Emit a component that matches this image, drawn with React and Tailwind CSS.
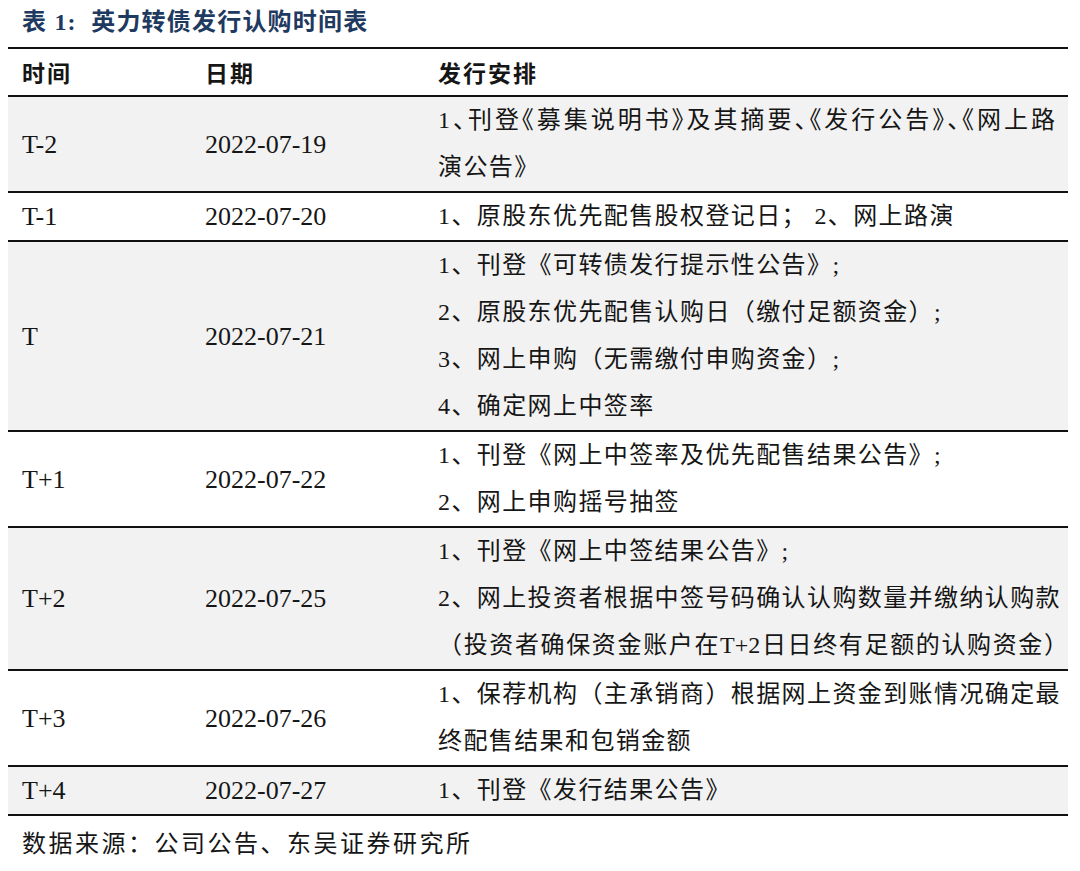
import React from "react";

const rows = [
  {
    t: "T-2",
    date: "2022-07-19",
    h: "min-h-[94px]",
    lines: [
      { text: "1、刊登《募集说明书》及其摘要、《发行公告》、《网上路", full: true, tight: true },
      { text: "演公告》" },
    ],
  },
  { t: "T-1", date: "2022-07-20", h: "min-h-[48px]", lines: [{ text: "1、原股东优先配售股权登记日； 2、网上路演" }] },
  {
    t: "T",
    date: "2022-07-21",
    h: "min-h-[188px]",
    lines: [
      { text: "1、刊登《可转债发行提示性公告》;" },
      { text: "2、原股东优先配售认购日（缴付足额资金）;" },
      { text: "3、网上申购（无需缴付申购资金）;" },
      { text: "4、确定网上中签率" },
    ],
  },
  {
    t: "T+1",
    date: "2022-07-22",
    h: "min-h-[94px]",
    lines: [{ text: "1、刊登《网上中签率及优先配售结果公告》;" }, { text: "2、网上申购摇号抽签" }],
  },
  {
    t: "T+2",
    date: "2022-07-25",
    h: "min-h-[142px]",
    lines: [
      { text: "1、刊登《网上中签结果公告》;" },
      { text: "2、网上投资者根据中签号码确认认购数量并缴纳认购款", full: true },
      { text: "（投资者确保资金账户在T+2日日终有足额的认购资金）", full: true, wide: true },
    ],
  },
  {
    t: "T+3",
    date: "2022-07-26",
    h: "min-h-[94px]",
    lines: [{ text: "1、保荐机构（主承销商）根据网上资金到账情况确定最", full: true }, { text: "终配售结果和包销金额" }],
  },
  { t: "T+4", date: "2022-07-27", h: "min-h-[48px]", lines: [{ text: "1、刊登《发行结果公告》" }] },
];

function Line({ line }) {
  if (line.full) {
    return (
      <div
        className={`whitespace-nowrap leading-[47px] [text-align-last:justify] ${
          line.wide ? "w-[630px] tracking-[0px]" : "w-[617px]"
        } ${line.tight ? "tracking-[0px] [font-feature-settings:'halt']" : ""}`}
      >
        {line.text}
      </div>
    );
  }
  return <div className="whitespace-nowrap leading-[47px]">{line.text}</div>;
}

export default function App() {
  return (
    <div className="w-[1080px] h-[871px] bg-white text-[#161616] font-['Liberation_Serif','Noto_Sans_CJK_SC',serif]">
      <div className="h-[47px] pl-[22px] pt-[6px] text-[24px] leading-[32px] font-bold text-[#1f3a60] tracking-[1.2px]">
        表 1:&nbsp; 英力转债发行认购时间表
      </div>
      <div className="mx-[8px] w-[1060px] border-t-2 border-[#111]">
        <div className="grid grid-cols-[183px_233px_1fr] h-[48px] items-center border-b-2 border-[#111] font-bold text-[23px] tracking-[2px] font-['Noto_Sans_CJK_SC',sans-serif]">
          <div className="pl-[14px]">时间</div>
          <div className="pl-[14px]">日期</div>
          <div className="pl-[14px]">发行安排</div>
        </div>
        {rows.map((r, i) => (
          <div
            key={r.t}
            className={`grid grid-cols-[183px_233px_1fr] border-b-2 border-[#111] ${r.h} ${
              i % 2 === 0 ? "bg-[#f2f2f2]" : "bg-white"
            }`}
          >
            <div className="pl-[14px] flex items-center text-[26px]">{r.t}</div>
            <div className="pl-[14px] flex items-center text-[26px]">{r.date}</div>
            <div className="pl-[14px] flex flex-col justify-center text-[24px] tracking-[1.4px]">
              {r.lines.map((l, j) => (
                <Line key={j} line={l} />
              ))}
            </div>
          </div>
        ))}
      </div>
      <div className="pl-[22px] pt-[12px] text-[24px] leading-[32px] tracking-[2.5px]">
        数据来源：公司公告、东吴证券研究所
      </div>
    </div>
  );
}
